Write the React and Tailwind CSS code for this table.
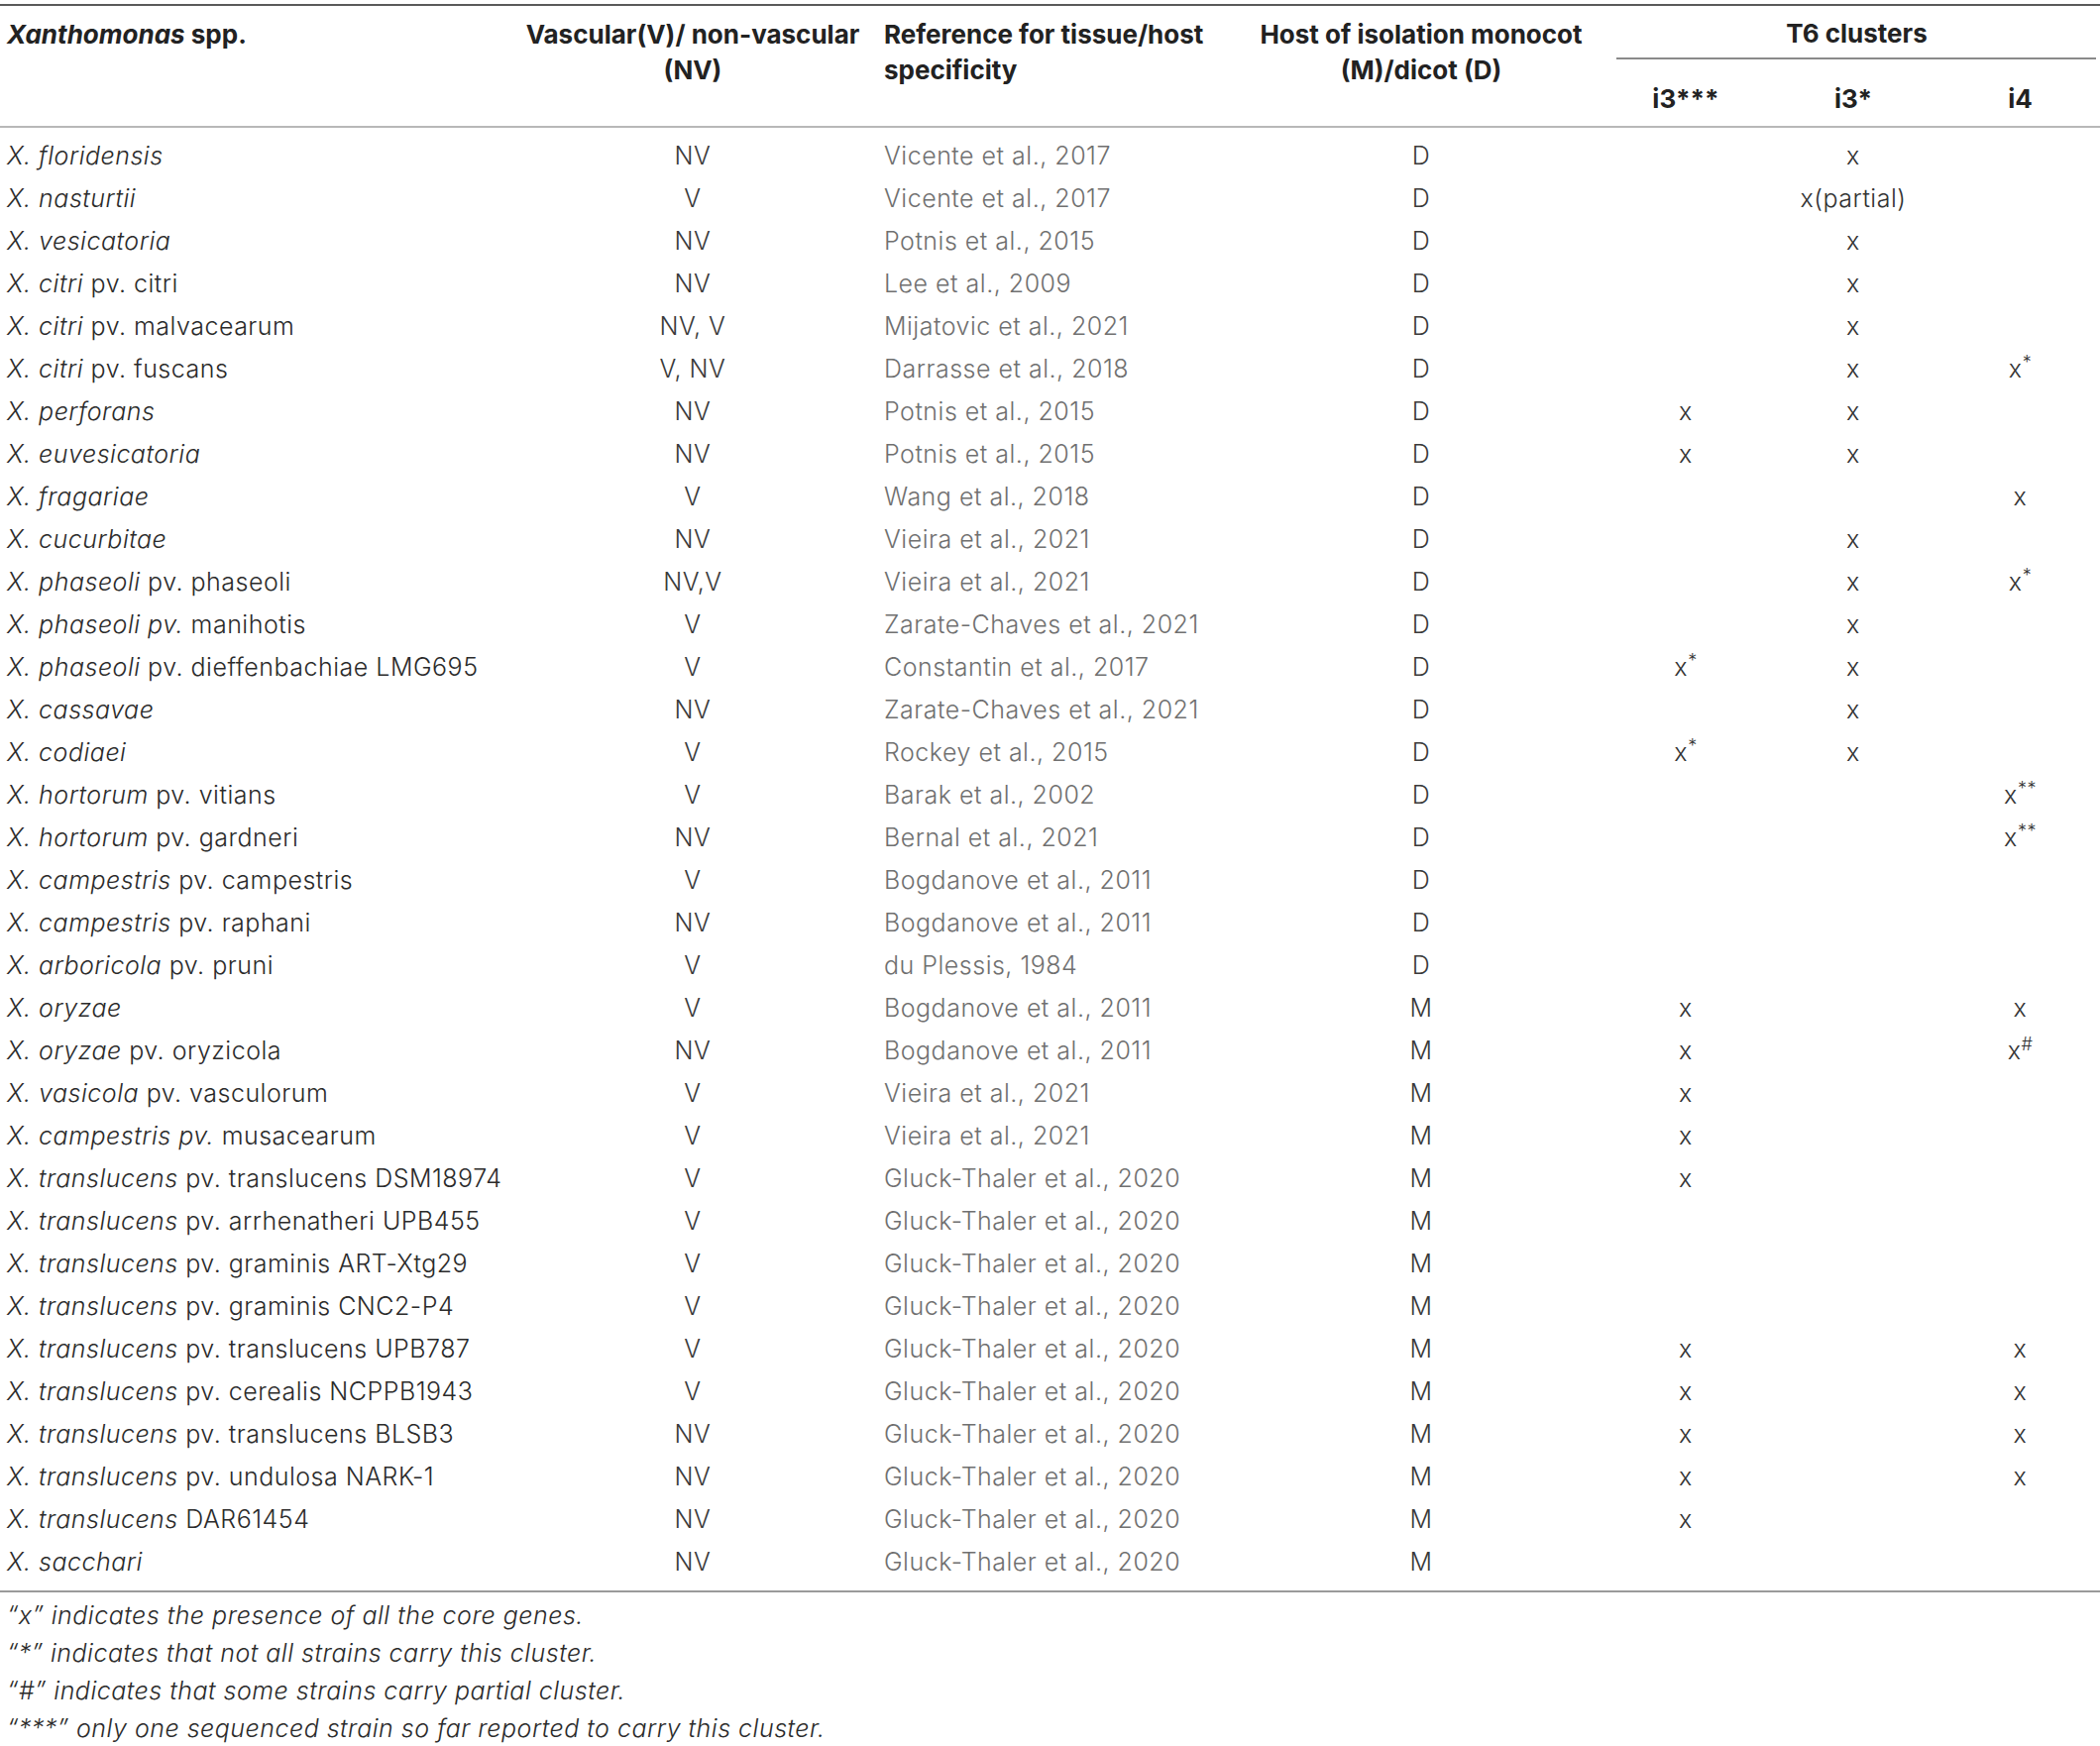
const grid = 'grid grid-cols-[525px_348px_391px_340px_194px_144px_177px]'

const rows = [
  [<><i>X. floridensis</i></>, 'NV', 'Vicente et al., 2017', 'D', '', 'x', ''],
  [<><i>X. nasturtii</i></>, 'V', 'Vicente et al., 2017', 'D', '', 'x(partial)', ''],
  [<><i>X. vesicatoria</i></>, 'NV', 'Potnis et al., 2015', 'D', '', 'x', ''],
  [<><i>X. citri</i> pv. citri</>, 'NV', 'Lee et al., 2009', 'D', '', 'x', ''],
  [<><i>X. citri</i> pv. malvacearum</>, 'NV, V', 'Mijatovic et al., 2021', 'D', '', 'x', ''],
  [<><i>X. citri</i> pv. fuscans</>, 'V, NV', 'Darrasse et al., 2018', 'D', '', 'x', 'x*'],
  [<><i>X. perforans</i></>, 'NV', 'Potnis et al., 2015', 'D', 'x', 'x', ''],
  [<><i>X. euvesicatoria</i></>, 'NV', 'Potnis et al., 2015', 'D', 'x', 'x', ''],
  [<><i>X. fragariae</i></>, 'V', 'Wang et al., 2018', 'D', '', '', 'x'],
  [<><i>X. cucurbitae</i></>, 'NV', 'Vieira et al., 2021', 'D', '', 'x', ''],
  [<><i>X. phaseoli</i> pv. phaseoli</>, 'NV,V', 'Vieira et al., 2021', 'D', '', 'x', 'x*'],
  [<><i>X. phaseoli pv.</i> manihotis</>, 'V', 'Zarate-Chaves et al., 2021', 'D', '', 'x', ''],
  [<><i>X. phaseoli</i> pv. dieffenbachiae LMG695</>, 'V', 'Constantin et al., 2017', 'D', 'x*', 'x', ''],
  [<><i>X. cassavae</i></>, 'NV', 'Zarate-Chaves et al., 2021', 'D', '', 'x', ''],
  [<><i>X. codiaei</i></>, 'V', 'Rockey et al., 2015', 'D', 'x*', 'x', ''],
  [<><i>X. hortorum</i> pv. vitians</>, 'V', 'Barak et al., 2002', 'D', '', '', 'x**'],
  [<><i>X. hortorum</i> pv. gardneri</>, 'NV', 'Bernal et al., 2021', 'D', '', '', 'x**'],
  [<><i>X. campestris</i> pv. campestris</>, 'V', 'Bogdanove et al., 2011', 'D', '', '', ''],
  [<><i>X. campestris</i> pv. raphani</>, 'NV', 'Bogdanove et al., 2011', 'D', '', '', ''],
  [<><i>X. arboricola</i> pv. pruni</>, 'V', 'du Plessis, 1984', 'D', '', '', ''],
  [<><i>X. oryzae</i></>, 'V', 'Bogdanove et al., 2011', 'M', 'x', '', 'x'],
  [<><i>X. oryzae</i> pv. oryzicola</>, 'NV', 'Bogdanove et al., 2011', 'M', 'x', '', 'x#'],
  [<><i>X. vasicola</i> pv. vasculorum</>, 'V', 'Vieira et al., 2021', 'M', 'x', '', ''],
  [<><i>X. campestris pv.</i> musacearum</>, 'V', 'Vieira et al., 2021', 'M', 'x', '', ''],
  [<><i>X. translucens</i> pv. translucens DSM18974</>, 'V', 'Gluck-Thaler et al., 2020', 'M', 'x', '', ''],
  [<><i>X. translucens</i> pv. arrhenatheri UPB455</>, 'V', 'Gluck-Thaler et al., 2020', 'M', '', '', ''],
  [<><i>X. translucens</i> pv. graminis ART-Xtg29</>, 'V', 'Gluck-Thaler et al., 2020', 'M', '', '', ''],
  [<><i>X. translucens</i> pv. graminis CNC2-P4</>, 'V', 'Gluck-Thaler et al., 2020', 'M', '', '', ''],
  [<><i>X. translucens</i> pv. translucens UPB787</>, 'V', 'Gluck-Thaler et al., 2020', 'M', 'x', '', 'x'],
  [<><i>X. translucens</i> pv. cerealis NCPPB1943</>, 'V', 'Gluck-Thaler et al., 2020', 'M', 'x', '', 'x'],
  [<><i>X. translucens</i> pv. translucens BLSB3</>, 'NV', 'Gluck-Thaler et al., 2020', 'M', 'x', '', 'x'],
  [<><i>X. translucens</i> pv. undulosa NARK-1</>, 'NV', 'Gluck-Thaler et al., 2020', 'M', 'x', '', 'x'],
  [<><i>X. translucens</i> DAR61454</>, 'NV', 'Gluck-Thaler et al., 2020', 'M', 'x', '', ''],
  [<><i>X. sacchari</i></>, 'NV', 'Gluck-Thaler et al., 2020', 'M', '', '', ''],
]

// "x*" -> x with raised mark
const Mark = ({ v }) => {
  if (!v) return null
  if (v === 'x' || v === 'x(partial)') return <span>{v}</span>
  return (
    <span>
      x<sup className="text-[18px] top-[-0.5em]">{v.slice(1)}</sup>
    </span>
  )
}

export default function App() {
  return (
    <div className="w-[2119px] min-h-[1762px] bg-white pt-1 text-[25px] tracking-[0.02em] text-[#2b2b2b] font-light [font-family:Inter,'Liberation_Sans',sans-serif]">
      <div className="border-t-2 border-[#5a5a5a]">
        {/* header */}
        <div className={`${grid} h-[123px] border-b-2 border-[#b8b8b8] font-bold text-[26px] tracking-normal text-[#222] leading-[36px] whitespace-nowrap`}>
          <div className="pl-[7px] pt-[11px]">
            <i>Xanthomonas</i> spp.
          </div>
          <div className="pt-[11px] text-center">
            Vascular(V)/ non-vascular
            <br />
            (NV)
          </div>
          <div className="pl-[19px] pt-[11px]">
            Reference for tissue/host
            <br />
            specificity
          </div>
          <div className="pt-[11px] text-center">
            Host of isolation monocot
            <br />
            (M)/dicot (D)
          </div>
          <div className="col-span-3 flex flex-col pt-[10px]">
            <div className="pl-6 text-center">T6 clusters</div>
            <div className="ml-[27px] mr-[4px] mt-[6px] border-t-2 border-[#8a8a8a]" />
            <div className="grid grid-cols-[194px_144px_177px] pt-[22px]">
              <div className="text-center">i3***</div>
              <div className="text-center">i3*</div>
              <div className="pl-4 text-center">i4</div>
            </div>
          </div>
        </div>

        {/* body */}
        <div className="border-b-2 border-[#9a9a9a] py-[7px]">
          {rows.map((r, i) => (
            <div key={i} className={`${grid} h-[43px] items-center`}>
              <div className="pl-[7px] whitespace-nowrap">{r[0]}</div>
              <div className="text-center text-[#3a3a3a]">{r[1]}</div>
              <div className="pl-[19px] text-[#707070] whitespace-nowrap">{r[2]}</div>
              <div className="text-center text-[#3a3a3a]">{r[3]}</div>
              <div className="text-center text-[#333]"><Mark v={r[4]} /></div>
              <div className="text-center text-[#333]"><Mark v={r[5]} /></div>
              <div className="pl-4 text-center text-[#333]"><Mark v={r[6]} /></div>
            </div>
          ))}
        </div>

        {/* footnotes */}
        <div className="pt-[4px] pl-[7px] italic leading-[38px] text-[#2b2b2b]">
          <p>“x” indicates the presence of all the core genes.</p>
          <p>“*” indicates that not all strains carry this cluster.</p>
          <p>“#” indicates that some strains carry partial cluster.</p>
          <p>“***” only one sequenced strain so far reported to carry this cluster.</p>
        </div>
      </div>
    </div>
  )
}
